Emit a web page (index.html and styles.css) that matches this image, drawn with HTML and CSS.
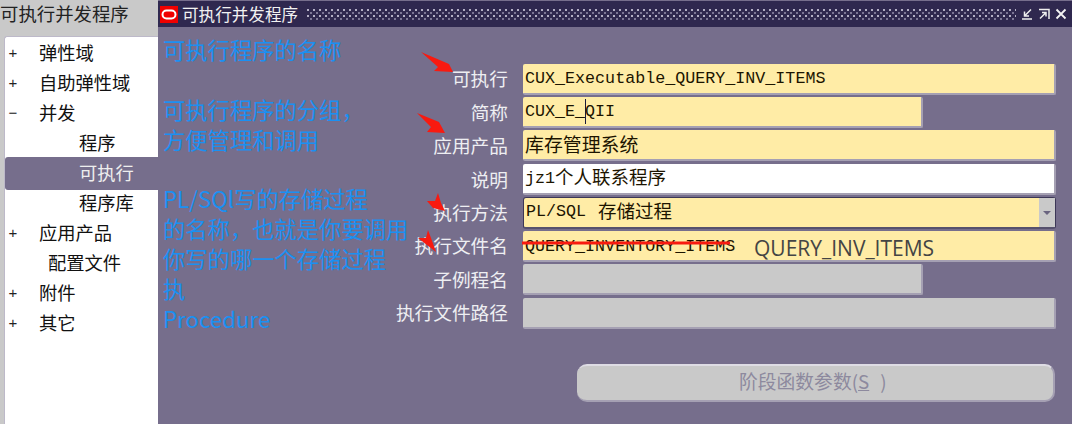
FILE: index.html
```html
<!DOCTYPE html>
<html lang="zh">
<head>
<meta charset="utf-8">
<title>可执行并发程序</title>
<link rel="stylesheet" href="styles.css">
</head>
<body>
<div class="app">
  <aside class="side">
    <div class="side-title">可执行并发程序</div>
    <ul class="tree">
      <li class="node"><span class="sign">+</span><span class="lab">弹性域</span></li>
      <li class="node"><span class="sign">+</span><span class="lab">自助弹性域</span></li>
      <li class="node"><span class="sign">−</span><span class="lab">并发</span></li>
      <li class="node child"><span class="lab">程序</span></li>
      <li class="node child selected"><span class="lab">可执行</span></li>
      <li class="node child"><span class="lab">程序库</span></li>
      <li class="node"><span class="sign">+</span><span class="lab">应用产品</span></li>
      <li class="node leaf"><span class="lab">配置文件</span></li>
      <li class="node"><span class="sign">+</span><span class="lab">附件</span></li>
      <li class="node"><span class="sign">+</span><span class="lab">其它</span></li>
    </ul>
  </aside>
  <main class="win">
    <header class="titlebar">
      <svg class="logo" viewBox="0 0 18 17" width="18" height="17"><rect width="18" height="17" fill="#f00000"/><rect x="2.5" y="4.5" width="13" height="8" rx="4" fill="none" stroke="#fff" stroke-width="2"/></svg>
      <span class="wintitle">可执行并发程序</span>
      <span class="dots"></span>
      <span class="winbtns">
        <svg viewBox="0 0 12 12" width="12" height="12"><path d="M10 1.5 L4 7.5 M3.5 3.5 V8 H8 M1 11 H11" fill="none" stroke="#eee" stroke-width="1.5"/></svg>
        <svg viewBox="0 0 12 12" width="12" height="12"><path d="M1 1.5 H11 V11 M2 10.5 L8 4.5 M4 4.5 H8 V8.5" fill="none" stroke="#eee" stroke-width="1.5"/></svg>
        <svg viewBox="0 0 12 12" width="12" height="12"><path d="M1.5 1.5 L10.5 10.5 M10.5 1.5 L1.5 10.5" fill="none" stroke="#f4f4f4" stroke-width="1.8"/></svg>
      </span>
    </header>
    <form class="form">
      <label class="flabel">可执行</label>
      <div class="field req mono">CUX_Executable_QUERY_INV_ITEMS</div>
      <label class="flabel">简称</label>
      <div class="field req mono short">CUX_E_<span class="caret"></span>QII</div>
      <label class="flabel">应用产品</label>
      <div class="field req cjk">库存管理系统</div>
      <label class="flabel">说明</label>
      <div class="field opt mono">jz1<span class="cjkin">个人联系程序</span></div>
      <label class="flabel">执行方法</label>
      <div class="field req mono select">PL/SQL <span class="cjkin gap">存储过程</span><span class="drop"><span class="tri"></span></span></div>
      <label class="flabel">执行文件名</label>
      <div class="field req mono filename">QUERY_INVENTORY_ITEMS<span class="handnote">QUERY_INV_ITEMS</span></div>
      <label class="flabel">子例程名</label>
      <div class="field off short"></div>
      <label class="flabel">执行文件路径</label>
      <div class="field off"></div>
    </form>
    <div class="actions">
      <button class="stage" type="button" disabled>阶段函数参数(<u>S</u><span class="sp"></span>)</button>
    </div>
    <div class="note note-a">可执行程序的名称</div>
    <div class="note note-b">可执行程序的分组，<br>方便管理和调用</div>
    <div class="note note-c">PL/SQl写的存储过程<br>的名称，也就是你要调用<br>你写的哪一个存储过程<br>执<br>Procedure</div>
    <svg class="marks" viewBox="158 0 914 424" width="914" height="424">
      <g fill="#f81a10">
        <polygon points="421,52 449,64 453,72 434,71 438,67"/>
        <polygon points="417,113 439,122 445,133 427,132 431,127"/>
        <polygon points="438,193 441,203 445,211 433,208 427,201 435,201"/>
        <polygon points="428,230 431,238 436,252 427,245 418,238 426,238"/>
      </g>
      <line x1="522" y1="243" x2="730" y2="243" stroke="#f81a10" stroke-width="3"/>
    </svg>
  </main>
</div>
</body>
</html>
```
FILE: styles.css
```css
* { box-sizing: border-box; }
html, body { margin: 0; padding: 0; }
body {
  width: 1072px;
  height: 424px;
  overflow: hidden;
  font-family: "Noto Sans CJK SC", "Liberation Sans", sans-serif;
  background: #766e8c;
}
.app { display: flex; height: 424px; }

/* navigator */
.side {
  width: 158px;
  flex: none;
  display: flex;
  flex-direction: column;
  background: #c9c9c9;
}
.side-title {
  height: 36px;
  font-size: 18.4px;
  line-height: 26px;
  color: #222;
  white-space: nowrap;
}
.tree {
  list-style: none;
  margin: 0 0 0 4px;
  padding: 1px 0 0;
  flex: 1;
  background: #fff;
  border-top: 1px solid #bdb9c9;
  border-left: 1px solid #bdb9c9;
  border-top-left-radius: 3px;
}
.node {
  height: 30.05px;
  display: flex;
  align-items: center;
  font-size: 18.3px;
  color: #111;
  white-space: nowrap;
  position: relative;
  padding-left: 34px;
  padding-bottom: 2px;
}
.sign {
  position: absolute;
  left: 3px;
  width: 10px;
  font-size: 15px;
  font-family: "Liberation Sans", sans-serif;
  text-align: center;
  color: #222;
}
.child { padding-left: 74px; }
.leaf { padding-left: 43px; }
.selected {
  background: #766e8c;
  color: #eee;
  height: 33px;
  margin: -1.5px 0;
  border-radius: 3px 0 0 3px;
}

/* window */
.win {
  flex: 1;
  position: relative;
  background: #766e8c;
  padding-top: 1px;
}
.titlebar {
  height: 26px;
  background: #2f284f;
  display: flex;
  align-items: center;
  padding: 0 5px 0 2px;
}
.logo { flex: none; margin-top: 1px; }
.wintitle {
  margin-left: 4px;
  font-size: 16.6px;
  color: #f2f2f2;
  white-space: nowrap;
}
.dots {
  flex: 1;
  height: 11px;
  margin: 0 5px 0 9px;
  background-color: #2f284f;
  background-image:
    radial-gradient(circle at 1px 1px, #b5b1c6 0.7px, transparent 1.1px),
    radial-gradient(circle at 4px 4px, #7d7796 0.7px, transparent 1.1px);
  background-size: 6px 6px;
}
.winbtns { display: flex; gap: 5px; flex: none; align-items: center; }

/* form */
.form {
  display: grid;
  grid-template-columns: 350px 1fr;
  grid-auto-rows: 33.45px;
  column-gap: 15px;
  padding: 36.5px 16px 0 0;
}
.flabel {
  justify-self: end;
  align-self: center;
  font-size: 18.7px;
  line-height: 24px;
  padding-bottom: 4px;
  color: #eeeef2;
  white-space: nowrap;
}
.field {
  height: 31px;
  border-radius: 2px;
  border-bottom: 2px solid #a5a0b3;
  border-right: 2px solid #a5a0b3;
  padding-left: 2px;
  display: flex;
  align-items: center;
  white-space: pre;
  color: #1c1400;
  position: relative;
}
.req { background: #ffeca6; }
.opt { background: #fff; }
.off { background: #c9c9c9; }
.mono { font-family: "Liberation Mono", "Noto Sans CJK SC", monospace; font-size: 16.7px; }
.cjk { font-size: 18.9px; padding-bottom: 3px; }
.cjkin {
  font-family: "Noto Sans CJK SC", sans-serif;
  font-size: 18.5px;
  position: relative;
  top: -2px;
}
.gap { margin-left: 2px; top: -1px; }
.short { width: 400px; }
.caret {
  display: inline-block;
  width: 1px;
  height: 25px;
  margin-right: -1px;
  background: #1a1a3a;
}
.select {
  border: 1px solid #3c3757;
  border-bottom: 2px solid #56516d;
  border-radius: 3px;
  padding: 0 0 3px 2px;
  height: 32px;
}
.drop {
  position: absolute;
  right: 0;
  top: 0;
  bottom: 0;
  width: 16px;
  background: #c9c9c9;
  display: flex;
  align-items: center;
  justify-content: center;
}
.tri {
  width: 0;
  height: 0;
  border-left: 4px solid transparent;
  border-right: 4px solid transparent;
  border-top: 4px solid #6a6480;
}
.filename { padding-top: 3px; }
.handnote {
  position: absolute;
  left: 231px;
  top: 3px;
  font-family: "Open Sans", sans-serif;
  font-size: 21px;
  line-height: 28px;
  color: #444;
}

/* button */
.actions {
  display: flex;
  justify-content: flex-end;
  padding: 33px 17px 0 0;
}
.stage {
  width: 478px;
  height: 38px;
  background: #c9c9c9;
  border: none;
  border-top: 2px solid #dedce4;
  border-bottom: 2px solid #a5a0b3;
  border-right: 2px solid #a5a0b3;
  border-radius: 10px;
  padding: 0 0 6px 162px;
  text-align: left;
  font-family: "Noto Sans CJK SC", sans-serif;
  font-size: 18.8px;
  color: #8d899e;
}
.sp { display: inline-block; width: 11px; }

/* annotations on top of the form */
.note {
  position: absolute;
  left: 5px;
  font-size: 22.3px;
  color: #1a90f2;
  white-space: nowrap;
}
.note-a { top: 33px; line-height: 32px; }
.note-b { top: 95px; line-height: 29.5px; }
.note-c { top: 183px; line-height: 30.1px; }
.marks { position: absolute; left: 0; top: 0; pointer-events: none; }
```
